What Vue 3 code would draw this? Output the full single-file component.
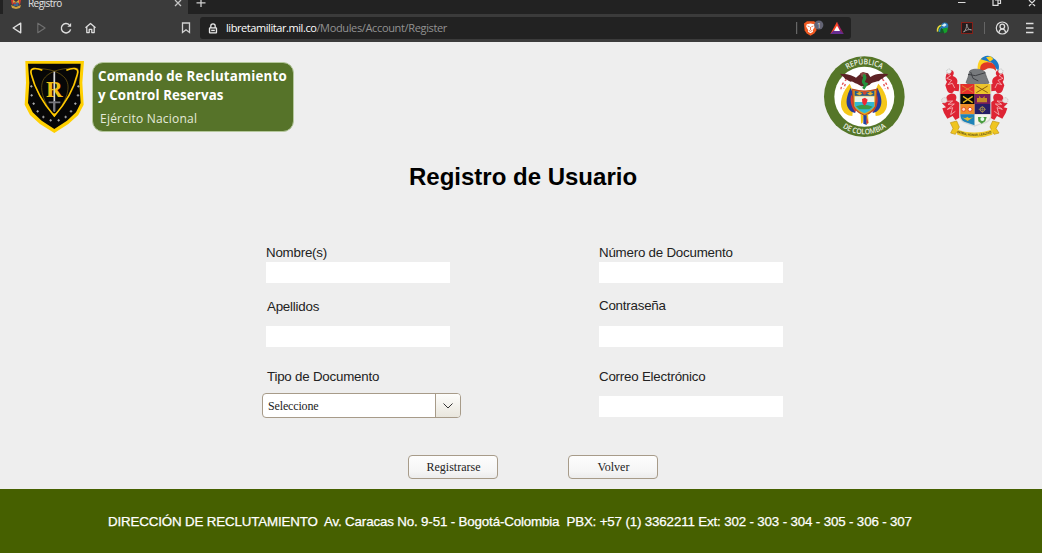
<script setup>
import { ref } from 'vue'

const leftFields = [
  { id: 'nombres', label: 'Nombre(s)' },
  { id: 'apellidos', label: 'Apellidos' },
]
const rightFields = [
  { id: 'numero', label: 'Número de Documento', type: 'text' },
  { id: 'clave', label: 'Contraseña', type: 'password' },
  { id: 'correo', label: 'Correo Electrónico', type: 'text' },
]
const tipo = ref('Seleccione')
const stars = [[49, 103], [50, 130], [56, 155], [68, 178], [85, 195], [107, 205], [131, 205], [152, 195], [168, 178], [181, 155], [189, 130], [190, 103]]
</script>

<template>
  <div class="window">
    <div class="tabs">
      <div class="tab">
        <svg class="favicon" width="12" height="9" viewBox="0 0 12 9">
          <path d="M1 0h3l1 2-3 3zM11 0H8L7 2l3 3z" fill="#d23a2c" />
          <path d="M3 0l3 2 3-2v3H3z" fill="#d8a93c" />
          <path d="M3.5 2.5h5v3.5h-5z" fill="#3f6691" />
          <path d="M3.5 2.5H6V4H3.5z" fill="#c33a30" />
          <path d="M1 5l5 2 5-2-1 3-4 1-4-1z" fill="#d0a240" />
        </svg>
        <span class="tab-title">Registro</span>
        <svg class="tab-close" width="8" height="8" viewBox="0 0 8 8"><path d="M1 0l6 6M7 0L1 6" stroke="#c4c4c4" stroke-width="1.3" /></svg>
      </div>
      <svg class="plus" width="10" height="9" viewBox="0 0 10 9"><path d="M5 0v7M.5 2.8h9" stroke="#d0d0d0" stroke-width="1.3" /></svg>
      <svg class="controls" width="82" height="8" viewBox="0 0 82 8" fill="none" stroke="#ddd" stroke-width="1.2">
        <path d="M-.5 2.5h8M35 0v5.3h5V0M37 0h5.5v3.5h-2M71 0l6 6M77 0l-6 6" />
      </svg>
    </div>

    <div class="toolbar">
      <svg class="nav" width="100" height="28" viewBox="0 0 100 28" fill="none" stroke="#dedede" stroke-width="1.4" stroke-linejoin="round">
        <path d="M20.7 9.2v9.6L13.2 14z" />
        <path d="M37.8 9.2v9.6l7.3-4.8z" stroke="#707070" stroke-width="1.1" />
        <path d="M69.3 10.8A4.7 4.7 0 1 0 70.6 15.4" />
        <path d="M67.3 12.8h3.8V9z" fill="#dedede" stroke="none" />
        <path d="M85.5 13.8l5-4.3 5 4.3M86.8 13v5.6h2.4v-3.2h2.6v3.2h2.4V13" stroke-width="1.3" />
      </svg>
      <svg class="bookmark" width="10" height="12" viewBox="0 0 10 12"><path d="M1.5 1h7v9.5L5 7.8l-3.5 2.7z" fill="none" stroke="#d2d2d2" stroke-width="1.3" /></svg>
      <div class="address">
        <svg width="10" height="11" viewBox="0 0 10 11">
          <path d="M2.8 5V3a2.2 2.2 0 0 1 4.4 0v2" fill="none" stroke="#e8e8e8" stroke-width="1.3" />
          <rect x="1.5" y="4.9" width="7" height="5" rx=".5" fill="#333" stroke="#e8e8e8" stroke-width="1.3" />
          <path d="M3.2 7.4h3.6" stroke="#e8e8e8" stroke-width="1.3" />
        </svg>
        <span class="url"><span class="host">libretamilitar.mil.co</span><span class="path">/Modules/Account/Register</span></span>
        <svg class="shields" width="52" height="22" viewBox="0 0 52 22">
          <path d="M.7 5v12" stroke="#777" />
          <path d="M11 4.2h7l3 2.3-.7 7-2 3-3.8 2.2-3.8-2.2-2-3-.7-7z" fill="#f15a22" />
          <path d="M10.8 7.2l3.7-.8 3.7.8.7 2.3-2.2 3.8.3 1.5-2.5 1.5-2.5-1.5.3-1.5-2.2-3.8z" fill="#fff" />
          <path d="M11.6 9l2 .7M17.4 9l-2 .7M14.5 10v3M13 13.5l1.5.8 1.5-.8" stroke="#e75a2a" stroke-width=".8" fill="none" />
          <circle cx="22.8" cy="8" r="4.6" fill="#626373" />
          <text x="21" y="10.6" class="badge-text">1</text>
          <path d="M41 4.7l3.3 8.5-9.9 3.7z" fill="#ff4724" />
          <path d="M41 4.7l6.8 12.2-4.2-3.9z" fill="#9e1f63" />
          <path d="M34.4 16.9h13.4l-4.2-4H38z" fill="#662d91" />
          <path d="M41 8.8l3 5.1h-6z" fill="#fff" />
        </svg>
      </div>
      <svg class="extensions" width="110" height="28" viewBox="0 0 110 28">
        <circle cx="11.5" cy="15" r="4.3" fill="#15592a" />
        <path d="M7.6 17.6c-.4-4 1.3-6 4.4-6.4" fill="none" stroke="#ead33d" stroke-width="1.6" />
        <path d="M9.6 17.8c-.3-2.6.6-4 2.6-4.6" fill="none" stroke="#2a7fc4" stroke-width="1.4" />
        <circle cx="14.8" cy="12" r="3.5" fill="#2779b8" />
        <path d="M11.6 11.6l3.2-2.4 1.9 1.8-2.6 1.8z" fill="#d8eef9" />
        <path d="M12.6 14.6l5.4-1-1 4.4-2.6 1.6z" fill="#16a02a" />
        <rect x="31.5" y="8.5" width="11" height="11" fill="#261c1c" stroke="#842019" />
        <path d="M33.5 18c2-1.5 3.4-4.500 3.300-8 .3 3.800 1.900 5.800 4.700 5.900-2.700-.9-5.300.1-8 2.100z" fill="none" stroke="#aaa" stroke-width=".8" />
        <path d="M54.5 8v12" stroke="#656565" />
        <circle cx="72.300" cy="14" r="6" fill="none" stroke="#dedede" stroke-width="1.2" />
        <circle cx="72.300" cy="12.500" r="2.300" fill="none" stroke="#dedede" stroke-width="1.300" />
        <path d="M69 18.600c.3-2.500 1.400-3.500 3.300-3.500s3 1 3.300 3.500" fill="none" stroke="#dedede" stroke-width="1.300" />
        <path d="M96 9.500h7.500M96 14h7.500M96 18.500h7.500" stroke="#dedede" stroke-width="1.300" />
      </svg>
    </div>

    <header class="masthead">
      <svg class="unit-shield" width="61" height="74" viewBox="27 24 183 222">
        <path d="M31 27h176l-5 65 4 66-16 31-30 27-42 27-43-27-30-27-16-31 4-66z" fill="#ffd000" />
        <path d="M39 35h158l-4 57 4 61-14 28-27 25-38 25-38-25-27-25-14-28 4-61z" fill="#070707" />
        <path d="M49 53c32-7 75 0 97 21 29 27 6 76-28 119-36-43-54-78-65-109-5-16-7-25-4-31z" fill="none" stroke="#7d6410" stroke-width="2" />
        <path d="M188 49c-38-3-79 6-97 26-25 27-4 80 27 116 34-39 57-76 67-109 4-15 6-27 3-33z" fill="none" stroke="#7d6410" stroke-width="2" />
        <path d="M82 55c-18-8-40-10-33 12 9 36 33 84 69 125 36-41 60-89 69-125 7-22-15-20-33-12" fill="none" stroke="#ffc800" stroke-width="5" />
        <path d="M108 180q10 9 20 0l-10 14z" fill="#ffc800" />
        <g v-for="(s, i) in stars" :key="i"><path :d="`M${s[0] - 4} ${s[1]}h8m-4-4v8`" stroke="#c8c8c8" stroke-width="2.2" /></g>
        <path d="M118 59v118" stroke="#d4d4d9" stroke-width="5" />
        <path d="M101 151h35M118 147v33" stroke="#77777e" stroke-width="5" />
        <text x="93" y="134" class="monogram" textLength="50" lengthAdjust="spacingAndGlyphs">R</text>
        <path d="M118 66v70" stroke="#dbdbd4" stroke-width="3" />
      </svg>
      <div class="command">
        <div class="command-name">Comando de Reclutamiento</div>
        <div class="command-name second">y Control Reservas</div>
        <div class="army">Ejército Nacional</div>
      </div>

      <svg class="republic" width="100" height="96" viewBox="0 0 300 288">
        <circle cx="148" cy="146" r="121" fill="#557628" />
        <circle cx="148" cy="146" r="90" fill="#fff" />
        <path id="arc-top" d="M51 146a97 97 0 0 1 194 0" fill="none" />
        <path id="arc-bottom" d="M35 146a113 113 0 0 0 226 0" fill="none" />
        <text class="seal-text"><textPath href="#arc-top" startOffset="50%" text-anchor="middle" textLength="108" lengthAdjust="spacingAndGlyphs">REPÚBLICA</textPath></text>
        <text class="seal-text"><textPath href="#arc-bottom" startOffset="50%" text-anchor="middle" textLength="140" lengthAdjust="spacingAndGlyphs">DE COLOMBIA</textPath></text>
        <path d="M104 107c-19 20-30 49-25 70 5 19 19 27 33 27l7-63z" fill="#f4c719" />
        <path d="M107 119c-12 24-17 46-7 62 5 10 14 13 21 14l-4-50z" fill="#263b99" />
        <path d="M109 140c-5 19-1 34 12 53l5-14z" fill="#e23b32" />
        <path d="M190 107c19 20 30 49 25 70-5 19-19 27-33 27l-7-63z" fill="#f4c719" />
        <path d="M187 119c12 24 17 46 7 62-5 10-14 13-21 14l4-50z" fill="#263b99" />
        <path d="M186 140c5 19 1 34-12 53l-5-14z" fill="#e23b32" />
        <path d="M95 94c-9 6-18 21-17 33M91 108l-5 14M202 94c9 6 18 21 17 33M206 108l5 14" stroke="#e55252" stroke-width="4" stroke-dasharray="7 7" fill="none" />
        <path d="M113 124q35 11 72 0l-3 51q-9 17-33 28-25-11-34-29z" fill="#e4a51e" stroke="#bb4b22" stroke-width="4" />
        <path d="M119 128q30 9 59 0v15h-59z" fill="#1d5b95" />
        <path d="M123 137l11-6 8 6-8 5zM156 137l10-6 9 6-9 5z" fill="#e6b229" /><circle cx="149" cy="134" r="6" fill="#cc4733" />
        <path d="M119 145h59v17h-59z" fill="#e9f4e7" />
        <path d="M119 162h59v13q-9 13-29 21-22-9-30-22z" fill="#33b8d3" />
        <path d="M123 175q24-10 50 1l-10 8h-30z" fill="#3a9a46" />
        <path d="M141 153l9-4 8 6-4 13-6 5-6-8z" fill="#ed2933" />
        <path d="M137 198l9 5-3 21-5 3zM159 198l-9 5 5 27 6-5z" fill="#f4c719" />
        <path d="M145 202h10v29l-10-4z" fill="#2145a4" /><path d="M155 204l5 21-6 2z" fill="#d8323b" />
        <path d="M76 77c20 1 33 3 47 12l12-10 10-6 14 3 7 11c17-12 28-10 53-9-2 9-13 6-15 14-10 0-8 8-17 8-10 4-17 3-23 10l-10 5h-15l-13-8c-8 0-12-8-19-6-8-1-10-8-17-8-1-7-11-8-14-16z" fill="#5d2325" />
        <path d="M135 76l9-4 11 6-5 8h-10z" fill="#8a4b45" />
        <path d="M145 80c13 11-12 19 6 29M148 83c10 10-14 18 6 25l-9 14" fill="none" stroke="#24913c" stroke-width="8" />
      </svg>

      <svg class="arms" width="90" height="96" viewBox="0 0 270 288">
        <g id="mantle-left">
          <path d="M58 66c13-2 17 10 10 18 12 3 17 13 13 24l8 1-3 21-14-2c-5 12-17 9-21-1l-5-15 5-11c-8-8-3-26 7-35z" fill="#de2434" />
          <path d="M63 137c14-2 20 9 14 20l12 8-1 44-12 7-8-12-16 8-10-17-5-14 11-3-12-12 16-8c-5-9-4-17 11-21z" fill="#de2434" />
          <path d="M50 75l12 8-12 8 15 6-11 13 13-4 7 14M48 160l20-1-14 10 19-1-21 16 16-5-6 21 14-10" fill="none" stroke="#fbdada" stroke-width="2" />
          <circle cx="57" cy="70" r="7" fill="#eee" stroke="#aaa" stroke-width="2" stroke-dasharray="3 2" />
          <circle cx="43" cy="157" r="8" fill="#e8e4e4" stroke="#b6aaaa" stroke-width="2" stroke-dasharray="3 2" />
        </g>
        <use href="#mantle-left" transform="matrix(-1 0 0 1 269 0)" />
        <path d="M143 64c-2-26 12-39 28-37l9 5-14 30z" fill="#ffd21f" />
        <path d="M152 34c10-14 30-14 40-2 14 8 18 24 13 35l-8-6-10-16-19-7z" fill="#1c78c6" />
        <path d="M168 28l14-3 8 8-10 8z" fill="#ffd21f" />
        <path d="M151 66c-3-18 11-26 26-23 14 1 22 12 21 26-6-8-14-9-21-8-8 0-12 10-26 5z" fill="#e03a25" />
        <path d="M119 69c9-8 33-7 45 2l6 17 7 17c-17 7-57 10-69-1l6-16z" fill="#777a7d" stroke="#595b5e" stroke-width="2" />
        <path d="M114 79l22 4 30-9M122 72l7 19 16 8" stroke="#3e4044" stroke-width="3" fill="none" />
        <path d="M88 108h96v97q-1 15-17 21-14 3-33 10-18-6-32-11-13-6-14-22z" fill="#d8d8d8" />
        <path d="M91 108h43v30H91z" fill="#e42e2a" /><path d="M134 108h47v30h-47z" fill="#edc52b" />
        <path d="M91 138h43v30H91z" fill="#090909" /><path d="M134 138h47v30h-47z" fill="#741e5c" />
        <path d="M91 168h43v31H91z" fill="#ef8d28" /><path d="M134 168h47v31h-47z" fill="#271f66" />
        <path d="M91 199h43v33l-31-11q-11-3-12-22z" fill="#1e83b8" /><path d="M134 199h47q0 18-16 23l-31 10z" fill="#f5f4e9" />
        <path d="M96 113l33 20M129 113l-33 20" stroke="#db8730" stroke-width="3" />
        <path d="M139 114l34 20M173 114l-34 20" stroke="#8c5d10" stroke-width="3" />
        <path d="M99 145l29 19M128 145l-29 19" stroke="#e6b91b" stroke-width="4" />
        <path d="M141 150h6v-7l6 7h5l6-7v7h7v13h-30zM151 151v10M162 151v10" fill="#c58c26" />
        <circle cx="101" cy="184" r="6" fill="#ffd5c2" stroke="#e75126" stroke-width="3" /><circle cx="120" cy="184" r="6" fill="#fff" stroke="#e74a26" stroke-width="3" />
        <circle cx="157" cy="184" r="7" fill="none" stroke="#a8924c" stroke-width="3" /><path d="M146 184h22M157 174v21" stroke="#a8924c" stroke-width="2" />
        <path d="M95 207q12 6 17-1 4 8 18 1l-17 12z" fill="#e5bc2a" />
        <path d="M144 207h26l-4 13-11 7-10-7z" fill="#4b9d41" /><circle cx="157" cy="213" r="6" fill="#e9fff2" />
        <path d="M61 224l19-5 8 18-12 22-14-4 7-14zM208 224l-20-5-8 18 12 22 15-4-9-14z" fill="#efc51f" stroke="#be9410" stroke-width="2" />
        <path d="M77 242q54 23 114 0l-4 18q-52 19-105 0z" fill="#f1cb2a" />
        <path id="motto" d="M80 254q53 20 109 0" fill="none" /><text class="motto"><textPath href="#motto" textLength="106" lengthAdjust="spacingAndGlyphs">PATRIA, HONOR, LEALTAD</textPath></text>
      </svg>
    </header>

    <main>
      <h1>Registro de Usuario</h1>
      <form class="fields" @submit.prevent>
        <div class="column left">
          <div v-for="f in leftFields" :key="f.id" class="field" :class="f.id">
            <label :for="f.id">{{ f.label }}</label>
            <input :id="f.id" type="text" />
          </div>
          <div class="field tipo">
            <label for="tipo">Tipo de Documento</label>
            <button id="tipo" class="combo" type="button">
              <span class="combo-value">{{ tipo }}</span>
              <span class="combo-arrow"><svg width="10" height="6" viewBox="0 0 10 6"><path d="M.5.5L5 5 9.5.5" fill="none" stroke="#333" stroke-width="1" /></svg></span>
            </button>
          </div>
        </div>
        <div class="column right">
          <div v-for="f in rightFields" :key="f.id" class="field" :class="f.id">
            <label :for="f.id">{{ f.label }}</label>
            <input :id="f.id" :type="f.type" />
          </div>
        </div>
      </form>
      <div class="actions">
        <button type="button" class="action">Registrarse</button>
        <button type="button" class="action">Volver</button>
      </div>
    </main>

    <footer>DIRECCIÓN DE RECLUTAMIENTO&nbsp; Av. Caracas No. 9-51 - Bogotá-Colombia&nbsp; PBX: +57 (1) 3362211 Ext: 302 - 303 - 304 - 305 - 306 - 307</footer>
  </div>
</template>

<style>
body { margin: 0; background: #eee; }
</style>

<style scoped>
* { box-sizing: border-box; }
.window { width: 1042px; height: 553px; overflow: hidden; display: flex; flex-direction: column; background: #eee; font-family: "Liberation Sans", Arial, sans-serif; }
svg { display: block; flex: none; }

.tabs { height: 14px; flex: none; display: flex; background: #222; padding-left: 3px; }
.tab { width: 185px; display: flex; background: #3b3b3b; padding-left: 7px; }
.tab-title { margin: -4px 0 0 6px; width: 146px; font: 10px/14px "Open Sans", sans-serif; letter-spacing: -.55px; color: #e4e4e4; }
.plus { margin-left: 8px; }
.controls { margin-left: auto; margin-right: 2px; }

.toolbar { height: 28px; flex: none; display: flex; align-items: center; background: #3b3b3b; }
.bookmark { margin-left: 81px; }
.address { margin-left: 9px; width: 651px; height: 22px; display: flex; align-items: center; border-radius: 3px; background: #222; padding-left: 8px; }
.url { margin-left: 8px; font: 11px/16px "Open Sans", sans-serif; white-space: nowrap; }
.host { color: #fff; letter-spacing: -.43px; }
.path { color: #929292; letter-spacing: -.35px; }
.shields { margin-left: auto; margin-right: 3px; }
.badge-text { font: 7px "Open Sans", sans-serif; fill: #ddd; }
.extensions { margin-left: 79px; }

.masthead { height: 100px; flex: none; display: flex; align-items: flex-start; padding-left: 24px; }
.unit-shield { margin-top: 18px; }
.monogram { font: bold 70px "Liberation Serif", serif; fill: #efbd13; }
.command { margin: 20px 0 0 7px; width: 202px; height: 70px; border-radius: 11px; border: 1px solid #b4c79c; background: #567329; padding: 4px 0 0 5px; color: #fff; font-family: "Open Sans", sans-serif; white-space: nowrap; }
.command-name { font-size: 13.3px; line-height: 19px; font-weight: 700; letter-spacing: .2px; }
.command-name.second { letter-spacing: 0.12px; }
.army { margin: 4px 0 0 2px; font-size: 12px; line-height: 19px; letter-spacing: .22px; color: #e4eadb; }
.republic { margin: 6px 0 0 521px; }
.arms { margin: 6px 0 0 15px; }
.seal-text { font: 600 23px "Open Sans", sans-serif; fill: #eef2e7; }
.motto { font: bold 10px "Liberation Sans", sans-serif; fill: #51430b; }

main { height: 347px; flex: none; padding-top: 20px; }
h1 { margin: 0; height: 30px; padding-left: 409px; font-size: 24px; line-height: 30px; color: #000; white-space: nowrap; }
.fields { display: flex; margin-top: 50px; padding-left: 266px; }
.column { width: 333px; }
.field { display: flex; flex-direction: column; }
label { height: 20px; font-size: 13.33px; line-height: 20px; letter-spacing: -.22px; color: #222; white-space: nowrap; }
.nombres label, .numero label { line-height: 22px; }
input { width: 184px; height: 21px; padding: 2px; border: 0; background: #fff; }
.apellidos { padding-top: 14px; }
.apellidos label, .tipo label { padding-left: 1px; }
.apellidos input, .clave input { margin-top: 9px; }
.clave { padding-top: 13px; }
.clave input { margin-top: 10px; }
.tipo, .correo { padding-top: 20px; }
.correo input { margin-top: 9px; }
.combo { width: 199px; height: 25px; margin: 6px 0 0 -4px; padding: 0; display: flex; border: 1px solid #a79b89; border-radius: 4px; background: #fff; overflow: hidden; text-align: left; color: #222; font: 12px/23px "Liberation Serif", serif; letter-spacing: -.15px; }
.combo-value { flex: 1; padding: 1px 0 0 5px; }
.combo-arrow { width: 25px; height: 23px; display: grid; place-items: center; border-left: 1px solid #a79b89; background: linear-gradient(#fdfdfb, #e9e6dd); }
.actions { display: flex; gap: 70px; margin-top: 37px; padding-left: 408px; }
.action { width: 90px; height: 24px; padding: 0 0 0 1px; border: 1px solid #a79b89; border-radius: 4px; background: linear-gradient(#fdfdfd, #f5f5f5 70%, #ececec); color: #222; font: 12px/22px "Liberation Serif", serif; }

footer { height: 64px; flex: none; padding: 1px 0 0 108px; background: #466000; color: #fff; font-size: 13.33px; line-height: 64px; letter-spacing: -.15px; -webkit-text-stroke: .25px #fff; white-space: nowrap; }
</style>
